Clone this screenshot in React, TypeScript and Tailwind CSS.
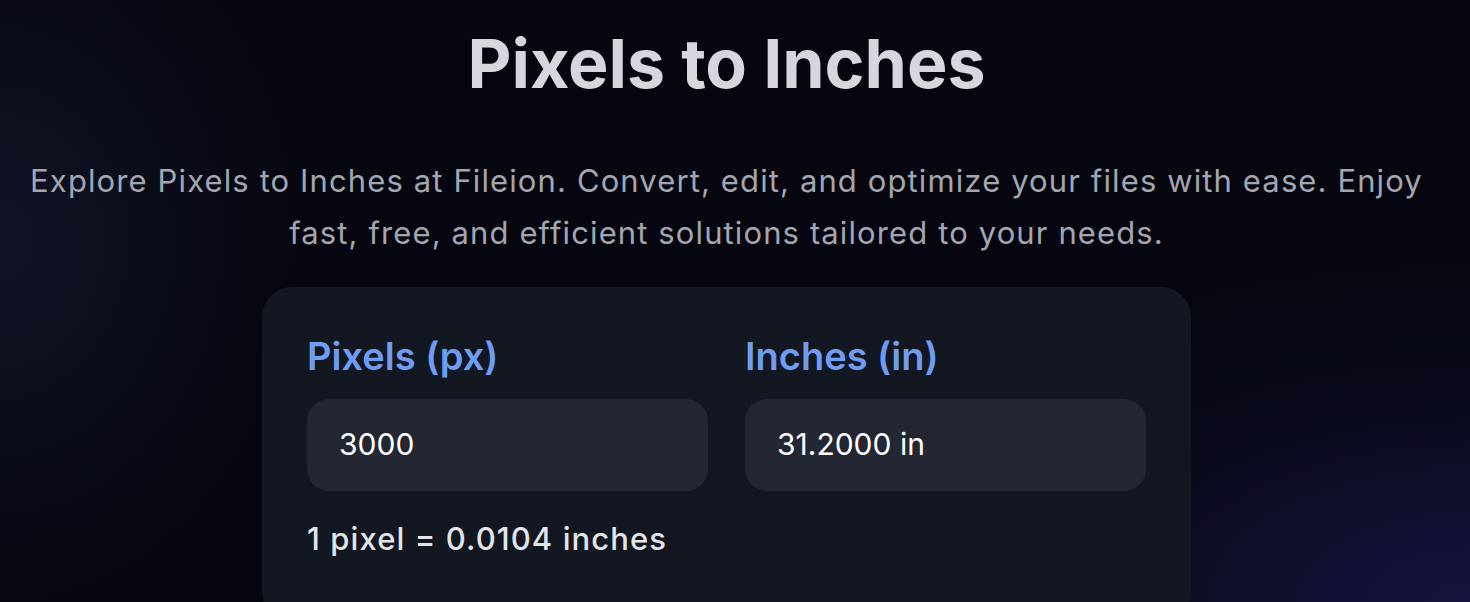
import React from "react";

const font = { fontFamily: "Inter, 'Noto Sans', sans-serif" };

export default function App() {
  return (
    <div
      className="w-full h-[602px] overflow-hidden bg-[#05060f] bg-[radial-gradient(ellipse_60%_75%_at_100%_100%,#16143f_0%,rgba(12,12,36,0.6)_45%,transparent_75%),radial-gradient(ellipse_20%_60%_at_0%_40%,#111426_0%,transparent_100%)]"
      style={font}
    >
      <div className="w-[1453px] flex flex-col items-center pt-[29px]">
        <h1 className="text-[68px] leading-none font-bold text-[#d6d7dc]">
          Pixels to Inches
        </h1>
        <p className="mt-[58px] w-[1420px] text-center text-[31px] leading-[52px] tracking-[0.036em] text-[#a3a6af]">
          Explore Pixels to Inches at Fileion. Convert, edit, and optimize your files with ease. Enjoy fast, free, and efficient solutions tailored to your needs.
        </p>

        <div className="mt-[28px] w-[929px] rounded-[30px] bg-[#131722] px-[45px] pt-[47px] pb-[60px]">
          <div className="grid grid-cols-2 gap-[37px]">
            <div className="flex flex-col gap-[19px]">
              <label className="text-[38px] leading-[1.2] font-semibold text-[#709df2]">Pixels (px)</label>
              <div className="h-[92px] rounded-[22px] bg-[#222733] px-[32px] flex items-center text-[30px] text-white">
                3000
              </div>
            </div>
            <div className="flex flex-col gap-[19px]">
              <label className="text-[38px] leading-[1.2] font-semibold text-[#709df2]">Inches (in)</label>
              <div className="h-[92px] rounded-[22px] bg-[#222733] px-[32px] flex items-center text-[30px] text-white">
                31.2000 in
              </div>
            </div>
          </div>
          <p className="mt-[25px] text-[31px] leading-[1.5] font-medium tracking-[0.035em] text-[#e4e5e9]">
            1 pixel = 0.0104 inches
          </p>
        </div>
      </div>
    </div>
  );
}
